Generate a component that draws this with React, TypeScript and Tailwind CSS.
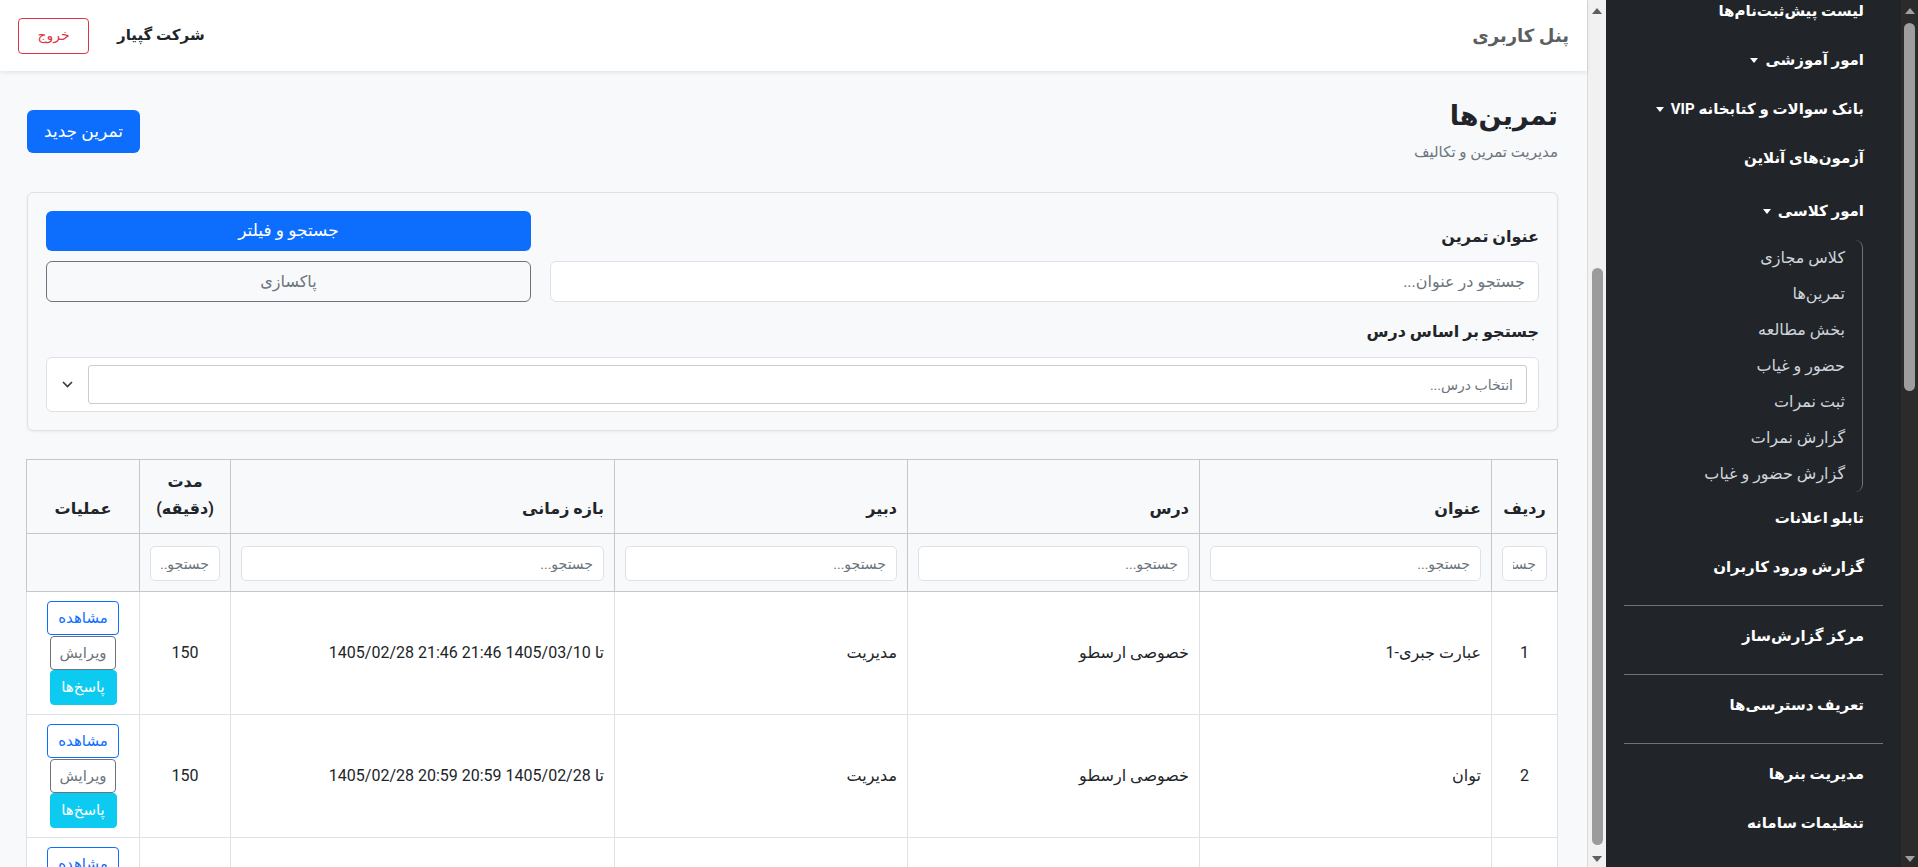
import React from "react";

const sideTop = [
  { label: "لیست پیش‌ثبت‌نام‌ها", caret: false },
  { label: "امور آموزشی", caret: true },
  { label: "بانک سوالات و کتابخانه VIP", caret: true },
  { label: "آزمون‌های آنلاین", caret: false },
];

const classItems = [
  "کلاس مجازی",
  "تمرین‌ها",
  "بخش مطالعه",
  "حضور و غیاب",
  "ثبت نمرات",
  "گزارش نمرات",
  "گزارش حضور و غیاب",
];

const rows = [
  {
    id: 1,
    title: "عبارت جبری-1",
    lesson: "خصوصی ارسطو",
    teacher: "مدیریت",
    range: "تا 1405/03/10 21:46 21:46 1405/02/28",
    duration: 150,
  },
  {
    id: 2,
    title: "توان",
    lesson: "خصوصی ارسطو",
    teacher: "مدیریت",
    range: "تا 1405/02/28 20:59 20:59 1405/02/28",
    duration: 150,
  },
  {
    id: 3,
    title: "معادله درجه دوم",
    lesson: "خصوصی ارسطو",
    teacher: "مدیریت",
    range: "تا 1405/02/27 18:30 18:30 1405/02/20",
    duration: 90,
  },
];

function Caret() {
  return (
    <span className="ms-[7px] inline-block h-0 w-0 border-x-[4.5px] border-t-[5px] border-x-transparent border-t-white" />
  );
}

function SideLink({ label, caret }: { label: string; caret?: boolean }) {
  return (
    <div className="flex h-[49px] items-center pr-[19px] text-[15px] font-bold text-white">
      <span>{label}</span>
      {caret && <Caret />}
    </div>
  );
}

function Sidebar() {
  return (
    <aside dir="rtl" className="h-full w-[295px] shrink-0 overflow-hidden bg-[#212529] px-[18px]">
      <div className="-mt-[13px]">
        {sideTop.map((s) => (
          <SideLink key={s.label} label={s.label} caret={s.caret} />
        ))}
        <div className="mt-[4px]">
          <SideLink label="امور کلاسی" caret />
        </div>
        <div className="mr-[20px] mt-[4px] rounded-[8px] border-r border-[#6c757d] pr-[17px]">
          {classItems.map((c) => (
            <div key={c} className="flex h-[36px] items-center text-[16px] text-[#ced4da]">
              {c}
            </div>
          ))}
        </div>
        <div className="mt-[2px]">
          <SideLink label="تابلو اعلانات" />
          <SideLink label="گزارش ورود کاربران" />
        </div>
        <hr className="mb-[6px] mt-[13px] border-t border-[#6c757d]" />
        <SideLink label="مرکز گزارش‌ساز" />
        <hr className="mb-[6px] mt-[13px] border-t border-[#6c757d]" />
        <SideLink label="تعریف دسترسی‌ها" />
        <hr className="mb-[6px] mt-[13px] border-t border-[#6c757d]" />
        <SideLink label="مدیریت بنرها" />
        <SideLink label="تنظیمات سامانه" />
      </div>
    </aside>
  );
}

function ScrollTrack({
  track,
  thumb,
  arrow,
  thumbTop,
  thumbHeight,
  bordered,
}: {
  track: string;
  thumb: string;
  arrow: string;
  thumbTop: string;
  thumbHeight: string;
  bordered?: boolean;
}) {
  return (
    <div className={`flex h-full shrink-0 flex-col items-center ${track} ${bordered ? "w-[19px] border-l border-[#dcdcdc]" : "w-[17px]"}`}>
      <div className="flex h-[22px] items-center justify-center">
        <span className={`h-0 w-0 border-x-[5px] border-b-[6px] border-x-transparent ${arrow}`} />
      </div>
      <div className={`w-[11px] rounded-full ${thumb} ${thumbTop} ${thumbHeight}`} />
      <div className="flex flex-1 items-end justify-center pb-[5px]">
        <span className={`h-0 w-0 border-x-[5px] border-t-[6px] border-x-transparent ${arrow}`} />
      </div>
    </div>
  );
}

function ActionButtons() {
  return (
    <div className="flex flex-col items-center">
      <button className="h-[34px] w-[72px] rounded-[4px] border border-[#0d6efd] bg-white text-[15px] text-[#0d6efd]">
        مشاهده
      </button>
      <button className="mt-[1px] h-[34px] w-[66px] rounded-[4px] border border-[#6c757d] bg-white text-[15px] text-[#6c757d]">
        ویرایش
      </button>
      <button className="h-[35px] w-[67px] rounded-[4px] border border-[#0dcaf0] bg-[#0dcaf0] text-[15px] text-white">
        پاسخ‌ها
      </button>
    </div>
  );
}

function ExercisesTable() {
  const th = "border border-[#c6c7c8] bg-[#f8f9fa] px-[10px] pb-[11px] pt-[8px] align-bottom text-[16px] font-bold leading-[27px] text-[#212529]";
  const fc = "border border-[#c6c7c8] bg-[#f8f9fa] px-[10px] pb-[10px] pt-[12px]";
  const td = "border border-[#dee2e6] bg-white px-[10px] py-[9px] align-middle text-[16px] text-[#212529]";
  const filter =
    "h-[35px] w-full min-w-0 rounded-[5px] border border-[#dee2e6] bg-white px-[10px] text-[14px] outline-none placeholder:text-[#6c757d]";

  return (
    <table className="mt-[28px] w-full table-fixed border-collapse">
      <colgroup>
        <col className="w-[66px]" />
        <col className="w-[292px]" />
        <col className="w-[292px]" />
        <col className="w-[293px]" />
        <col className="w-[384px]" />
        <col className="w-[91px]" />
        <col className="w-[113px]" />
      </colgroup>
      <thead>
        <tr>
          <th className={`${th} text-center`}>ردیف</th>
          <th className={`${th} text-right`}>عنوان</th>
          <th className={`${th} text-right`}>درس</th>
          <th className={`${th} text-right`}>دبیر</th>
          <th className={`${th} text-right`}>بازه زمانی</th>
          <th className={`${th} text-center`}>مدت (دقیقه)</th>
          <th className={`${th} text-center`}>عملیات</th>
        </tr>
        <tr>
          <td className={fc}><input className={filter} placeholder="جستجو..." /></td>
          <td className={fc}><input className={filter} placeholder="جستجو..." /></td>
          <td className={fc}><input className={filter} placeholder="جستجو..." /></td>
          <td className={fc}><input className={filter} placeholder="جستجو..." /></td>
          <td className={fc}><input className={filter} placeholder="جستجو..." /></td>
          <td className={fc}><input className={filter} placeholder="جستجو..." /></td>
          <td className={fc}></td>
        </tr>
      </thead>
      <tbody>
        {rows.map((r) => (
          <tr key={r.id}>
            <td className={`${td} text-center`}>{r.id}</td>
            <td className={`${td} text-right`}>{r.title}</td>
            <td className={`${td} text-right`}>{r.lesson}</td>
            <td className={`${td} text-right`}>{r.teacher}</td>
            <td className={`${td} text-right`}>{r.range}</td>
            <td className={`${td} text-center`}>{r.duration}</td>
            <td className={td}>
              <ActionButtons />
            </td>
          </tr>
        ))}
      </tbody>
    </table>
  );
}

function MainArea() {
  return (
    <div dir="rtl" className="flex h-full min-w-0 flex-1 flex-col bg-[#f8f9fa]">
      {/* Header */}
      <header className="relative z-10 flex h-[71px] shrink-0 items-center justify-between bg-white px-[18px] shadow-[0_2px_4px_rgba(0,0,0,0.08)]">
        <span className="text-[18px] font-bold text-[#5c5f62]">پنل کاربری</span>
        <div className="flex items-center gap-[28px]">
          <span className="text-[15px] font-bold text-[#212529]">شرکت گپیار</span>
          <button className="h-[36px] w-[71px] rounded-[4px] border border-[#dc3545] text-[14px] text-[#dc3545]">
            خروج
          </button>
        </div>
      </header>

      {/* Content */}
      <main className="min-h-0 flex-1 overflow-hidden pl-[27px] pr-[29px] pt-[25px]">
        <div className="flex items-start justify-between">
          <div>
            <h1 className="text-[27px] font-bold leading-[40px] text-[#212529]">تمرین‌ها</h1>
            <p className="mt-[6px] text-[15px] leading-[20px] text-[#6c757d]">مدیریت تمرین و تکالیف</p>
          </div>
          <button className="mt-[14px] h-[43px] w-[113px] rounded-[6px] bg-[#0d6efd] text-[17px] text-white">
            تمرین جدید
          </button>
        </div>

        {/* Filters */}
        <div className="mt-[30px] rounded-[6px] border border-[#dee2e6] bg-[#f8f9fa] p-[18px] shadow-[0_1px_3px_rgba(0,0,0,0.06)]">
          <div className="grid grid-cols-3 gap-x-[19px]">
            <div className="col-span-2 flex flex-col justify-end">
              <label className="h-[24px] text-[16px] font-bold leading-[24px] text-[#212529]">عنوان تمرین</label>
              <input
                className="mt-[12px] h-[41px] w-full rounded-[6px] border border-[#dee2e6] bg-white px-[13px] text-[16px] outline-none placeholder:text-[#6c757d]"
                placeholder="جستجو در عنوان..."
              />
            </div>
            <div className="flex flex-col gap-[10px]">
              <button className="h-[40px] w-full rounded-[6px] bg-[#0d6efd] text-[17px] text-white">جستجو و فیلتر</button>
              <button className="h-[41px] w-full rounded-[6px] border border-[#6c757d] text-[16px] text-[#6c757d]">پاکسازی</button>
            </div>
          </div>

          <label className="mt-[18px] block h-[24px] text-[16px] font-bold leading-[24px] text-[#212529]">
            جستجو بر اساس درس
          </label>
          <div className="mt-[13px] flex h-[55px] items-center rounded-[6px] border border-[#dee2e6] bg-white pr-[11px]">
            <input
              className="h-[39px] min-w-0 flex-1 rounded-[3px] border border-[#cccccc] bg-white px-[13px] text-[14px] outline-none placeholder:text-[#6c757d]"
              placeholder="انتخاب درس..."
            />
            <div className="flex w-[41px] justify-center">
              <svg width="11" height="7" viewBox="0 0 11 7" fill="none">
                <path d="M1 1l4.5 4.5L10 1" stroke="#343a40" strokeWidth="1.6" />
              </svg>
            </div>
          </div>
        </div>

        <ExercisesTable />
      </main>
    </div>
  );
}

export default function App() {
  return (
    <div
      dir="ltr"
      className="flex h-[867px] w-full overflow-hidden font-[family-name:Roboto,'DejaVu_Sans',sans-serif]"
    >
      <MainArea />
      <ScrollTrack
        bordered
        track="bg-[#f1f1f1]"
        thumb="bg-[#9b9b9b]"
        arrow="border-b-[#5f5f5f] border-t-[#5f5f5f]"
        thumbTop="mt-[246px]"
        thumbHeight="h-[577px]"
      />
      <Sidebar />
      <ScrollTrack
        track="bg-[#2b2b2b]"
        thumb="bg-[#9e9e9e]"
        arrow="border-b-[#a0a0a0] border-t-[#a0a0a0]"
        thumbTop="mt-[1px]"
        thumbHeight="h-[368px]"
      />
    </div>
  );
}
